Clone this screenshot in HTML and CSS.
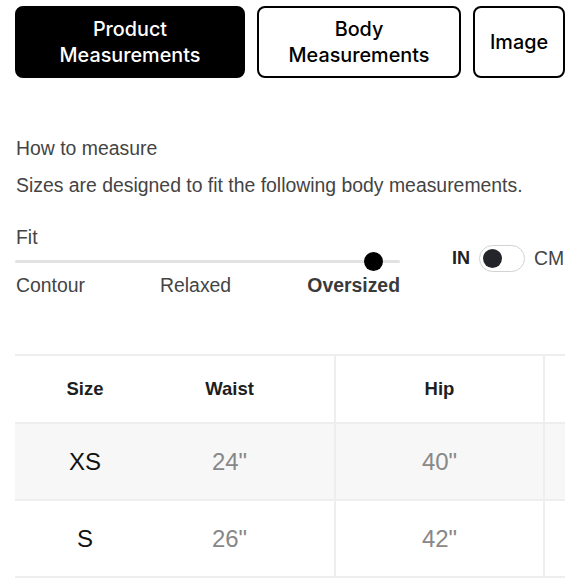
FILE: index.html
```html
<!DOCTYPE html>
<html>
<head>
<meta charset="utf-8">
<link rel="stylesheet" href="styles.css">
</head>
<body>
<div class="page">
  <div class="tabs">
    <div class="tab tab-active tab-product">Product<br>Measurements</div>
    <div class="tab tab-body">Body<br>Measurements</div>
    <div class="tab tab-image">Image</div>
  </div>

  <p class="howto">How to measure</p>
  <p class="desc">Sizes are designed to fit the following body measurements.</p>

  <div class="fit">
    <div class="fit-left">
      <div class="fit-title">Fit</div>
      <div class="track"><span class="knob"></span></div>
      <div class="fit-labels">
        <span class="lbl lbl-contour">Contour</span>
        <span class="lbl lbl-relaxed">Relaxed</span>
        <span class="lbl lbl-over">Oversized</span>
      </div>
    </div>
    <div class="units">
      <span class="unit-in">IN</span>
      <span class="toggle"><span class="toggle-knob"></span></span>
      <span class="unit-cm">CM</span>
    </div>
  </div>

  <div class="table">
    <div class="row head">
      <div class="cell c1">Size</div>
      <div class="cell c2">Waist</div>
      <div class="cell c3">Hip</div>
      <div class="cell c4"></div>
    </div>
    <div class="row odd">
      <div class="cell c1 sz">XS</div>
      <div class="cell c2 val">24"</div>
      <div class="cell c3 val">40"</div>
      <div class="cell c4"></div>
    </div>
    <div class="row">
      <div class="cell c1 sz">S</div>
      <div class="cell c2 val">26"</div>
      <div class="cell c3 val">42"</div>
      <div class="cell c4"></div>
    </div>
  </div>
</div>
</body>
</html>
```

FILE: styles.css
```css
* { box-sizing: border-box; }
html, body { margin: 0; padding: 0; background: #fff; }
body { font-family: "Liberation Sans", Arial, sans-serif; color: #444; }
.page { padding: 6px 15px 0 15px; width: 580px; }

.tabs { display: flex; gap: 12px; height: 72px; }
.tab {
  display: flex; align-items: center; justify-content: center; text-align: center;
  font-family: Inter, "Noto Sans", sans-serif; font-size: 19.8px; font-weight: 500; line-height: 26px;
  border: 2px solid #000; border-radius: 8px; color: #000; background: #fff;
}
.tab-active { background: #000; color: #fff; }
.tab-product { width: 230px; }
.tab-body { width: 204px; }
.tab-image { width: 92px; }

.howto { margin: 58px 0 0 1px; font-size: 19.4px; line-height: 24px; color: #444; }
.desc { margin: 13px 0 0 1px; font-size: 19.4px; line-height: 24px; color: #444; }

.fit { display: flex; margin-top: 28px; }
.fit-left { width: 385px; }
.fit-title { font-size: 19.4px; line-height: 24px; margin-left: 1px; }
.track { position: relative; height: 3px; background: #e2e2e2; margin-top: 11px; border-radius: 2px; }
.knob {
  position: absolute; left: 349px; top: -8px; width: 19px; height: 19px;
  border-radius: 50%; background: #000;
}
.fit-labels { position: relative; height: 24px; margin-top: 10px; font-size: 19.4px; line-height: 24px; }
.lbl { position: absolute; top: 0; }
.lbl-contour { left: 1px; }
.lbl-relaxed { left: 145px; }
.lbl-over { right: 0; font-weight: bold; color: #3a3a3a; }

.units { display: flex; align-items: center; margin-left: 52px; margin-top: 19px; height: 28px; }
.unit-in { font-weight: bold; font-size: 18px; color: #222; }
.toggle {
  position: relative; display: block; width: 46px; height: 27px; margin-left: 9px;
  border: 1px solid #d2d2d2; border-radius: 14px; background: #fff;
}
.toggle-knob {
  position: absolute; left: 3px; top: 3px; width: 19px; height: 19px; border-radius: 50%; background: #23252a;
}
.unit-cm { font-size: 19.4px; margin-left: 9px; color: #444; }

.table { margin-top: 57px; width: 550px; border-top: 2px solid #eeeeee; }
.row { display: grid; grid-template-columns: 140px 179px 209px 22px; border-bottom: 2px solid #eeeeee; height: 77px; }
.row.head { height: 68px; }
.row.odd { background: #f7f7f7; }
.cell { display: flex; align-items: center; justify-content: center; }
.c2 { padding-right: 30px; }
.c3 { border-left: 2px solid #eeeeee; }
.c4 { border-left: 2px solid #eeeeee; }
.head .cell { font-weight: bold; font-size: 18.5px; color: #1e1e1e; }
.sz { font-size: 24px; color: #111; }
.val { font-size: 24px; color: #888; }
```
